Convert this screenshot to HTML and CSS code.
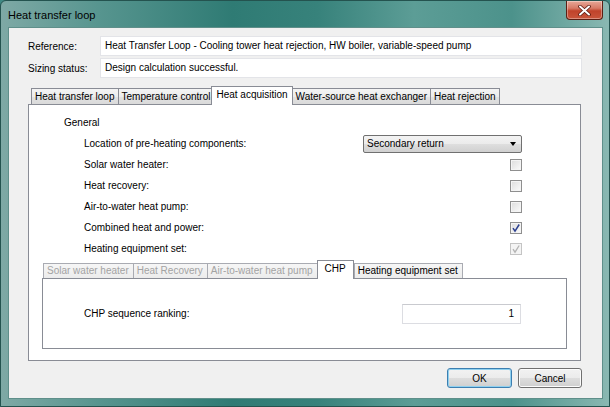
FILE: index.html
```html
<!DOCTYPE html>
<html lang="en">
<head>
    <meta charset="UTF-8">
    <title>Heat transfer loop</title>
    <link rel="stylesheet" href="styles.css">
</head>
<body>
    <div class="window">
        <div class="titlebar">
            <span class="title">Heat transfer loop</span>
            <button type="button" class="close-btn">
                <svg width="13" height="11" viewBox="0 0 13 11">
                    <path d="M2 1.5 L11 9.5 M11 1.5 L2 9.5" stroke="#5a1a10" stroke-width="3.6" stroke-linecap="round"/>
                    <path d="M2 1.5 L11 9.5 M11 1.5 L2 9.5" stroke="#fff" stroke-width="2" stroke-linecap="round"/>
                </svg>
            </button>
        </div>

        <div class="client">
            <div class="field-row">
                <label>Reference:</label>
                <div class="textbox">Heat Transfer Loop - Cooling tower heat rejection, HW boiler, variable-speed pump</div>
            </div>
            <div class="field-row">
                <label>Sizing status:</label>
                <div class="textbox">Design calculation successful.</div>
            </div>

            <div class="tabs">
                <div class="tab-strip">
                    <div class="tab">Heat transfer loop</div>
                    <div class="tab">Temperature control</div>
                    <div class="tab active">Heat acquisition</div>
                    <div class="tab">Water-source heat exchanger</div>
                    <div class="tab">Heat rejection</div>
                </div>
                <div class="panel">
                    <div class="group">
                        <div class="group-title">General</div>
                        <div class="prop-row">
                            <span>Location of pre-heating components:</span>
                            <div class="combo">
                                <span>Secondary return</span>
                                <span class="combo-arrow"></span>
                            </div>
                        </div>
                        <div class="prop-row">
                            <span>Solar water heater:</span>
                            <span class="checkbox"></span>
                        </div>
                        <div class="prop-row">
                            <span>Heat recovery:</span>
                            <span class="checkbox"></span>
                        </div>
                        <div class="prop-row">
                            <span>Air-to-water heat pump:</span>
                            <span class="checkbox"></span>
                        </div>
                        <div class="prop-row">
                            <span>Combined heat and power:</span>
                            <span class="checkbox">
                                <svg width="10" height="10" viewBox="0 0 10 10"><path d="M2 5.2 L4 8.2 L8.2 1.5" fill="none" stroke="#2b3f8f" stroke-width="1.5"/></svg>
                            </span>
                        </div>
                        <div class="prop-row">
                            <span>Heating equipment set:</span>
                            <span class="checkbox disabled">
                                <svg width="10" height="10" viewBox="0 0 10 10"><path d="M2 5.2 L4 8.2 L8.2 1.5" fill="none" stroke="#b4b4b4" stroke-width="1.3"/></svg>
                            </span>
                        </div>
                    </div>

                    <div class="subtabs">
                        <div class="tab-strip sub">
                            <div class="tab disabled">Solar water heater</div>
                            <div class="tab disabled">Heat Recovery</div>
                            <div class="tab disabled">Air-to-water heat pump</div>
                            <div class="tab active">CHP</div>
                            <div class="tab">Heating equipment set</div>
                        </div>
                        <div class="subpanel">
                            <div class="prop-row">
                                <span>CHP sequence ranking:</span>
                                <div class="numbox">1</div>
                            </div>
                        </div>
                    </div>
                </div>
            </div>

            <div class="buttons">
                <button type="button" class="btn default">OK</button>
                <button type="button" class="btn">Cancel</button>
            </div>
        </div>
    </div>
</body>
</html>
```

FILE: styles.css
```css
* {
    margin: 0;
    padding: 0;
    box-sizing: border-box;
}

body {
    font-family: "Liberation Sans", Arial, sans-serif;
    font-size: 10px;
    color: #000;
    background: #3f8983;
}

/* window frame with the aero-style teal glass */
.window {
    width: 610px;
    height: 407px;
    display: flex;
    flex-direction: column;
    padding: 0 6px 7px 7px;
    border: 1px solid #24534f;
    border-radius: 6px 6px 0 0;
    background: linear-gradient(90deg, #7ea9a5 0%, #57958f 16%, #2f7b74 38%, #37827b 52%, #5c9d96 68%, #4c928b 84%, #8ab8b2 100%);
}

.titlebar {
    height: 26px;
    display: flex;
    justify-content: space-between;
    align-items: flex-start;
}

.title {
    font-size: 11px;
    padding-top: 8px;
    color: #000;
}

.close-btn {
    width: 37px;
    height: 19px;
    border: 1px solid #5b1f14;
    border-top: none;
    border-radius: 0 0 4px 4px;
    background: linear-gradient(#e7a898 0%, #d77a66 40%, #c0432b 55%, #c9553b 100%);
    display: flex;
    justify-content: center;
    align-items: center;
    box-shadow: inset 0 0 0 1px rgba(255, 255, 255, 0.35);
}

.client {
    flex: 1;
    display: flex;
    flex-direction: column;
    background: #f0f0f0;
    border: 1px solid #5f8f8a;
    padding: 8px 20px 0 19px;
}

.field-row {
    display: flex;
    align-items: center;
    height: 20px;
    margin-bottom: 2px;
}

.field-row label {
    width: 72px;
}

.textbox {
    flex: 1;
    height: 20px;
    background: #fff;
    border: 1px solid #e3e4e8;
    padding: 0 4px;
    line-height: 18px;
    white-space: nowrap;
}

/* tab control */
.tabs {
    margin-top: 6px;
    margin-right: 1px;
}

.tab-strip {
    display: flex;
    align-items: flex-end;
    height: 18px;
    padding-left: 3px;
}

.tab {
    height: 16px;
    line-height: 15px;
    padding: 0 3px;
    border: 1px solid #898c95;
    border-bottom: none;
    margin-right: -1px;
    background: linear-gradient(#f4f4f4 0%, #ececec 50%, #e2e2e2 51%, #dadada 100%);
    white-space: nowrap;
}

.tab.active {
    position: relative;
    z-index: 1;
    height: 19px;
    margin: 0 -1px -1px -2px;
    padding: 0 4px;
    line-height: 16px;
    background: #fff;
}

.panel {
    height: 257px;
    background: #fff;
    border: 1px solid #898c95;
    padding-top: 7px;
}

.group {
    padding: 0 58px 0 35px;
}

.group-title {
    height: 21px;
    line-height: 21px;
}

.prop-row {
    height: 21px;
    display: flex;
    justify-content: space-between;
    align-items: center;
    padding-left: 20px;
}

.combo {
    width: 159px;
    height: 18px;
    display: flex;
    justify-content: space-between;
    align-items: center;
    padding: 0 5px 0 3px;
    border: 1px solid #707070;
    border-radius: 2px;
    background: linear-gradient(#f3f3f3 0%, #ebebeb 50%, #dedede 51%, #d0d0d0 100%);
}

.combo-arrow {
    width: 0;
    height: 0;
    border-left: 3.5px solid transparent;
    border-right: 3.5px solid transparent;
    border-top: 4px solid #000;
}

.checkbox {
    width: 12px;
    height: 12px;
    display: flex;
    justify-content: center;
    align-items: center;
    border: 1px solid #8f8f8f;
    background: linear-gradient(135deg, #dcdcdc, #fbfbfb);
    box-shadow: inset 0 0 0 1px #f4f4f4;
}

.checkbox.disabled {
    border-color: #c4c4c4;
    background: #f4f4f4;
}

/* nested tab control for the equipment pages */
.subtabs {
    margin: 1px 13px 0 13px;
}

.tab-strip.sub {
    padding-left: 1px;
}

.tab-strip.sub .tab {
    height: 15px;
    line-height: 14px;
    padding: 0 4px 0 3px;
    background: linear-gradient(#f6f6f6, #ececec);
    border-color: #a9abb2;
}

.tab-strip.sub .tab.disabled {
    color: #a3a3a3;
}

.tab-strip.sub .tab.active {
    height: 19px;
    line-height: 16px;
    padding: 0 7px;
    margin: 0 0 -1px 0;
    background: #fff;
    border-color: #898c95;
}

.subpanel {
    height: 71px;
    border: 1px solid #898c95;
    background: #fff;
    padding: 24px 45px 0 21px;
}

.numbox {
    width: 119px;
    height: 20px;
    line-height: 18px;
    text-align: right;
    padding-right: 6px;
    background: #fff;
    border: 1px solid #dcdde2;
    border-top-color: #c9cacf;
}

.buttons {
    display: flex;
    justify-content: flex-end;
    gap: 6px;
    margin-top: 7px;
}

.btn {
    width: 64px;
    height: 20px;
    font-family: "Liberation Sans", Arial, sans-serif;
    font-size: 10px;
    color: #000;
    border: 1px solid #707070;
    border-radius: 3px;
    background: linear-gradient(#f2f2f2 0%, #ebebeb 50%, #dddddd 51%, #cfcfcf 100%);
    box-shadow: inset 0 0 0 1px #fcfcfc;
}

.btn.default {
    width: 65px;
    border-color: #3c7fb1;
    box-shadow: inset 0 0 0 1px #8fd0ef;
}
```
